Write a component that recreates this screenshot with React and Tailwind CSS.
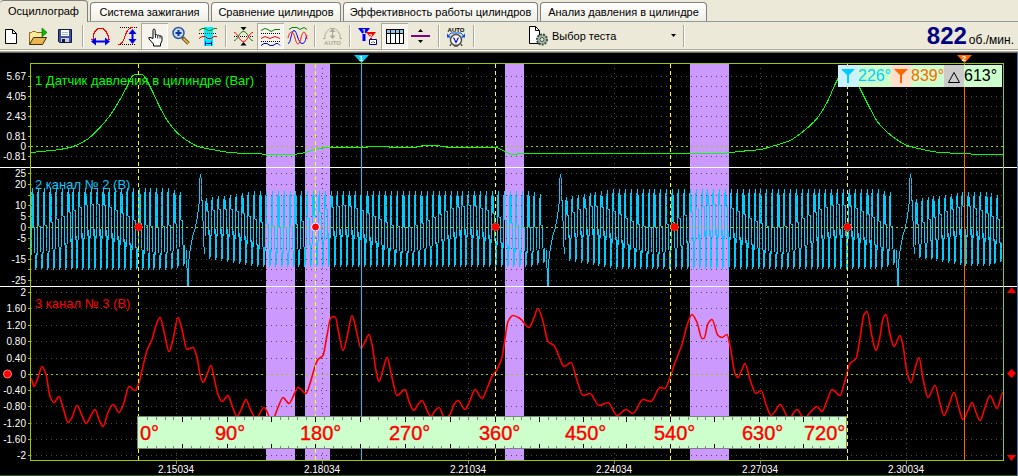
import React, { useState } from "react";

const tabs = [
  { name: "Осциллограф", width: "w-[88px]" },
  { name: "Система зажигания", width: "w-[119px]" },
  { name: "Сравнение цилиндров", width: "w-[130px]" },
  { name: "Эффективность работы цилиндров", width: "w-[195px]" },
  { name: "Анализ давления в цилиндре", width: "w-[167px]" },
];

const pressure = [
  [31, 152], [40, 151], [52, 150], [70, 147], [87, 139], [100, 127], [110, 115], [120, 99], [127, 86],
  [132, 76], [135, 74], [142, 74], [145, 77], [152, 90], [160, 107], [168, 121], [177, 132], [187, 140],
  [198, 146], [212, 149], [230, 152], [248, 153], [260, 153], [264, 154], [290, 154], [301, 153], [315, 149],
  [327, 147], [366, 147], [369, 146], [388, 146], [391, 147], [414, 147], [424, 145], [438, 145], [441, 146],
  [453, 147], [496, 147], [505, 151], [512, 154], [516, 154], [519, 153], [720, 153], [739, 151], [760, 149],
  [775, 145], [790, 140], [803, 131], [817, 118], [827, 102], [836, 82], [841, 74], [852, 74], [860, 88],
  [868, 104], [878, 122], [890, 134], [907, 145], [923, 149], [940, 152], [963, 153], [982, 154], [1003, 154],
];

const channel3 = [
  [31, 378], [34, 386], [38, 377], [42, 366], [46, 374], [50, 396], [54, 402], [59, 396], [63, 407], [68, 422],
  [72, 417], [77, 405], [82, 415], [86, 423], [91, 415], [95, 409], [99, 419], [103, 426], [108, 412],
  [113, 404], [119, 412], [124, 402], [129, 386], [135, 390], [139, 382], [142, 370], [147, 350], [152, 339],
  [156, 325], [160, 317], [164, 331], [169, 351], [173, 339], [178, 317], [182, 329], [187, 349], [193, 347],
  [197, 357], [200, 374], [203, 382], [207, 374], [211, 365], [214, 377], [218, 394], [222, 401], [228, 395],
  [232, 405], [237, 416], [242, 407], [246, 399], [250, 408], [256, 418], [264, 407], [272, 420], [278, 407],
  [283, 397], [289, 403], [294, 394], [298, 387], [306, 393], [310, 383], [315, 366], [318, 359], [323, 355],
  [327, 335], [331, 317], [335, 316], [339, 334], [343, 350], [348, 332], [352, 315], [357, 333], [361, 348],
  [365, 341], [369, 334], [372, 344], [376, 370], [379, 381], [383, 369], [387, 357], [392, 377], [397, 395],
  [405, 389], [409, 401], [414, 410], [418, 404], [422, 400], [427, 410], [431, 416], [435, 410], [439, 407],
  [445, 418], [450, 414], [454, 404], [458, 400], [465, 409], [470, 400], [475, 389], [482, 398], [487, 388],
  [492, 376], [497, 369], [502, 357], [505, 338], [508, 321], [513, 315], [520, 318], [529, 327], [534, 317],
  [538, 308], [543, 321], [548, 341], [554, 345], [559, 356], [564, 366], [571, 362], [577, 380], [583, 395],
  [590, 393], [599, 405], [608, 402], [617, 415], [626, 409], [633, 413], [643, 399], [651, 401], [660, 387],
  [665, 388], [670, 377], [675, 362], [682, 344], [687, 325], [692, 314], [697, 322], [702, 338], [704, 338],
  [708, 323], [712, 319], [718, 335], [722, 337], [727, 334], [730, 345], [735, 373], [738, 377], [742, 369],
  [745, 363], [750, 379], [756, 393], [761, 390], [766, 404], [771, 415], [775, 411], [780, 404], [789, 418],
  [797, 409], [804, 418], [811, 411], [817, 406], [822, 411], [827, 400], [832, 389], [840, 395], [845, 380],
  [850, 363], [856, 358], [860, 338], [864, 314], [867, 311], [872, 336], [876, 350], [880, 336], [883, 318],
  [886, 314], [890, 334], [894, 346], [900, 335], [903, 345], [907, 372], [911, 382], [915, 368], [919, 357],
  [923, 378], [928, 397], [935, 385], [940, 403], [944, 415], [949, 404], [954, 392], [959, 408], [963, 419],
  [968, 410], [972, 402], [976, 412], [980, 420], [985, 407], [990, 395], [997, 408], [1003, 392],
];

const bands = [[266, 29], [305, 25], [505, 19], [690, 39]];
const cycleMarks = [138, 315, 495, 670, 847];
const syncDots = [138, 315, 495, 674, 847];
const timeMarks = [
  [176, "2.15034"], [322, "2.18034"], [468, "2.21034"], [614, "2.24034"], [760, "2.27034"], [906, "2.30034"],
];

const rows = [
  [76, "5.67"], [86], [96, "4.05"], [106], [116, "2.43"], [126], [136, "0.81"], [146, "0"], [156, "-0.81"],
  [173, "25"], [184, "20"], [195], [205, "10"], [216, "5"], [227, "0"], [238, "-5"], [248], [259, "-15"], [269], [280, "-25"],
  [292, "2"], [308, "1.60"], [325, "1.20"], [341, "0.80"], [358, "0.40"], [374, "0"], [390, "-0.40"], [406, "-0.80"],
  [423, "-1.20"], [439, "-1.60"], [455, "-2"],
];

const rulerLabels = [
  [140, "0°"], [215, "90°"], [300, "180°"], [389, "270°"], [479, "360°"], [565, "450°"], [654, "540°"], [742, "630°"], [804, "720°"],
];

// cubic through the samples, flat at every local extreme
function smooth(points) {
  const slopes = points.map((p, i) => {
    const a = points[i - 1];
    const c = points[i + 1];
    if (!a || !c) return 0;
    const left = (p[1] - a[1]) / (p[0] - a[0]);
    const right = (c[1] - p[1]) / (c[0] - p[0]);
    return left * right <= 0 ? 0 : (2 * left * right) / (left + right);
  });
  let d = `M${points[0][0]} ${points[0][1] + 0.5}`;
  for (let i = 0; i < points.length - 1; i++) {
    const [x0, y0] = points[i];
    const [x1, y1] = points[i + 1];
    const h = (x1 - x0) / 3;
    d += `C${x0 + h} ${y0 + 0.5 + slopes[i] * h} ${x1 - h} ${y1 + 0.5 - slopes[i + 1] * h} ${x1} ${y1 + 0.5}`;
  }
  return d;
}

// crankshaft sensor: 58 teeth and a gap of two, one vertical run per pixel column
const gaps = [187, 547, 897];

function teeth(from, to, count, high, low, rampIn) {
  const pitch = (to - from) / count;
  let d = "";
  for (let i = 0; i < count; i++) {
    const start = Math.round(from + i * pitch);
    const fade = Math.min(1, rampIn ? 0.8 + i * 0.025 : 1, 0.86 + (count - i) * 0.05);
    const beat = Math.sin((start / 62) * Math.PI);
    const columns = [
      [-0.45 - beat * 0.2, 0.9],
      [0.3 - beat * 0.3, 1],
      [0.3 - beat * 0.3, 0.85],
      [-0.4 - beat * 0.2, 0.3 - beat * 0.3],
      [-1, -0.35 - beat * 0.3],
      [-0.95, -0.4 - beat * 0.2],
    ];
    columns.forEach(([bottom, top], k) => {
      if (k === 2 && i % 3 !== 0) return;
      const y = (v) => Math.round(227 - v * fade * (v > 0 ? high : low));
      d += `M${start + k}.5 ${y(top)}V${y(bottom)}`;
      if (k === 2) return;
      if (k === 3) d += `M${start + 2} ${y(top)}.5h2`;
    });
  }
  return d;
}

function gap(x) {
  const points = [
    [x - 1, 250], [x, 285], [x + 1, 285], [x + 1, 265], [x + 2, 254], [x + 5, 237], [x + 8, 227], [x + 10, 216],
    [x + 12, 200], [x + 12, 182], [x + 13, 174], [x + 14, 182], [x + 14, 200], [x + 15, 200], [x + 16, 240], [x + 17, 254],
  ];
  return "M" + points.map((p) => `${p[0]}.5 ${p[1]}`).join("L");
}

const channel2 =
  teeth(31, 185, 26, 39, 43, false) +
  gap(gaps[0]) +
  teeth(205, 545, 57, 36, 40, true) +
  gap(gaps[1]) +
  teeth(565, 895, 56, 38, 42, true) +
  gap(gaps[2]) +
  teeth(915, 1002, 15, 35, 39, true);

function rulerTicks() {
  const ticks = [];
  for (let s = 0; s < 4; s++) {
    const step = (cycleMarks[s + 1] - cycleMarks[s]) / 20;
    for (let i = 0; i < 20; i++) {
      if (s + i > 0) ticks.push([Math.round(cycleMarks[s] + i * step), i % 5 === 0]);
    }
  }
  return ticks;
}

function Icon({ children }) {
  return (
    <svg viewBox="0 0 27 26" className="h-[26px] w-[27px]" fill="none" aria-hidden="true">
      {children}
    </svg>
  );
}

const icons = {
  create: (
    <Icon>
      <path d="M7.500 6.500h7l4 4v10h-11z" fill="#fff" stroke="#000" />
      <path d="M14.500 6.500v4h4" stroke="#000" />
    </Icon>
  ),
  open: (
    <Icon>
      <path d="M4.500 21.500v-12h2l1-1h3l1 1h6v4" fill="#ffe79c" stroke="#8a6a14" />
      <path d="M4.500 21.500l4-7h13l-4 7z" fill="#e8b64c" stroke="#3c2c00" />
      <path d="M17 5v9l5-4.500z" fill="#00c000" stroke="#006000" strokeWidth=".6" />
    </Icon>
  ),
  save: (
    <Icon>
      <path d="M6.500 6.500h13v13h-12l-1-1z" fill="#3c50a0" stroke="#101840" />
      <path d="M9 7h8v6H9z" fill="#fff" />
      <path d="M10 9.500h6M10 11.500h6" stroke="#a8b4d8" />
      <path d="M9 15h8v4H9z" fill="#c8ccd8" />
      <path d="M10 16h3v3h-3z" fill="#101840" />
    </Icon>
  ),
  period: (
    <Icon>
      <path d="M4 16.500h2v-4l2-4 3-3h5l3 3 2 4v4h2" stroke="#f00" shapeRendering="crispEdges" />
      <path d="M7 18.500h13" stroke="#0000e8" strokeWidth="2" />
      <path d="M9 14.500v8l-5-4zM18 14.500v8l5-4z" fill="#0000e8" />
    </Icon>
  ),
  amplitude: (
    <Icon>
      <path d="M6 4.500h17M4 21.500h17" stroke="#000" strokeDasharray="1 1" shapeRendering="crispEdges" />
      <path d="M4 21.500c9 0 5-17 15-17" stroke="#f00" shapeRendering="crispEdges" />
      <path d="M18.500 9v10" stroke="#0000e8" strokeWidth="2" />
      <path d="M14.500 11h8l-4-5zM14.500 16h8l-4 5z" fill="#0000e8" />
    </Icon>
  ),
  hand: (
    <Icon>
      <path
        d="M12 15.500V7.500q0-1.500 1-1.500t1.200 1.500v4.500q1.500-1 2.300.3 1.500-.6 2.200.6 1.800-.4 2.300 1v3.600l-1.500 3.500v2h-7v-2l-4.500-5q-.8-1.800 1-1.600z"
        fill="#fff"
        stroke="#000"
      />
      <path d="M14.500 12v3M16.700 12.500v3M19 13v2.500" stroke="#000" strokeWidth=".8" />
    </Icon>
  ),
  zoom: (
    <Icon>
      <path d="M14.500 14.500l6 6" stroke="#705010" strokeWidth="3.500" />
      <path d="M15.500 15.500l5 5" stroke="#f0c060" strokeWidth="1.500" />
      <circle cx="10.500" cy="10" r="5.500" fill="#c4e0f8" stroke="#34569c" strokeWidth="1.500" />
      <path d="M7.500 10h6M10.500 7v6" stroke="#1030a0" strokeWidth="2" />
    </Icon>
  ),
  fit: (
    <Icon>
      <path d="M9 4h9v19H9z" fill="#00ecff" />
      <path d="M4 7.500l3-2h3l3 2h3l3-2h3" stroke="#008000" />
      <path d="M4 10.500h18" stroke="#000" strokeDasharray="1 1" shapeRendering="crispEdges" />
      <path d="M4 15.500l3-2h3l3 2h3l3-2h3" stroke="#f00" />
      <path d="M10 20.500h7M10.500 18.500v4M16.500 18.500v4" stroke="#0000c0" />
    </Icon>
  ),
  balance: (
    <Icon>
      <path d="M4 13.500h19" stroke="#000" strokeDasharray="1 1" shapeRendering="crispEdges" />
      <path d="M4 17.500c4 0 5-9 9.500-9s5 9 9.500 9" stroke="#008000" />
      <path d="M4 9.500c4 0 5 9 9.500 9s5-9 9.500-9" stroke="#f00" />
      <path d="M10.500 4h6l-3 3.500zM10.500 22.500h6l-3-3.500z" fill="#000" />
    </Icon>
  ),
  waves: (
    <Icon>
      <path d="M4 7.500l4-2 3 1 3 2 4-2h5" stroke="#008000" />
      <path d="M4 10.500h19M4 18.500h19" stroke="#000" strokeDasharray="1 1" shapeRendering="crispEdges" />
      <path d="M4 15.500l4-2 5 2 5-2 5 2" stroke="#f00" />
      <path d="M4 22.500l3-2h3l3 2h3l3-2h2l2 2" stroke="#0000e8" />
    </Icon>
  ),
  overlay: (
    <Icon>
      <path d="M5 6.500l3-2h5l3 2 4-2 3 2" stroke="#008000" />
      <path d="M4 20.500c3 0 3-13 6-13s4 13 8 13 3-5 5-8" stroke="#0000e8" />
      <path d="M4 15c2-8 5-8 7 0s4 8 6 0 4-8 6 1" stroke="#f00" />
    </Icon>
  ),
  autoOff: (
    <Icon>
      <path d="M4 15.500h2v-4l2-3 3-3h5l3 3 2 3v4h2" stroke="#aca899" />
      <path d="M13.500 7v7" stroke="#aca899" />
      <path d="M10.500 9h6l-3-3.500zM10.500 12.500h6l-3 3.500z" fill="#aca899" />
      <text x="13.500" y="22" textAnchor="middle" fill="#aca899" className="text-[6px] font-bold">AUTO</text>
    </Icon>
  ),
  markers: (
    <Icon>
      <path d="M4 5h12l-4.500 6v7h-3v-7z" fill="#0000f0" />
      <path d="M12 9h10l-4 5v6h-2v-6z" fill="#f00000" />
      <text x="8" y="11" fill="#fff" className="text-[7px] font-bold">1</text>
      <text x="15" y="15" fill="#fff" className="text-[6px] font-bold">2</text>
      <path d="M15.500 16.500h7v5h-7z" fill="#fff" stroke="#000080" />
      <path d="M17 19.500h1l1-1 1 1h1" stroke="#000080" strokeWidth=".7" />
    </Icon>
  ),
  table: (
    <Icon>
      <g shapeRendering="crispEdges">
        <path d="M5.500 6.500h17v14h-17z" fill="#fff" stroke="#000" />
        <path d="M6 7h16v3H6z" fill="#8cc8f0" />
        <path d="M5 10.500h18M9.500 7v13M14.500 7v13M18.500 7v13" stroke="#000" />
      </g>
    </Icon>
  ),
  split: (
    <Icon>
      <path d="M3 12h19v2H3z" fill="#800080" />
      <path d="M10 9h5l-2.500-3zM10 17h5l-2.500 3z" fill="#000" />
    </Icon>
  ),
  autoVolt: (
    <Icon>
      <text x="13" y="8.500" textAnchor="middle" fill="#000" className="text-[6px] font-bold">AUTO</text>
      <circle cx="13" cy="17" r="5.500" fill="#fff" stroke="#505050" strokeWidth="1.500" />
      <path d="M8 21l-1 2M18 21l1 2M11 23h4" stroke="#505050" strokeWidth="1.500" />
      <path d="M10.500 14.500l2.500 5 2.500-5" stroke="#0000f0" strokeWidth="1.200" />
      <path d="M5 13.500l3-3.500h10l3 3.500" stroke="#0050e0" />
      <path d="M4 10.500v4h4zM22 10.500v4h-4z" fill="#0050e0" />
    </Icon>
  ),
};

const groups = [
  [["create", "Новый"], ["open", "Открыть"], ["save", "Сохранить"]],
  [["period", "Период"], ["amplitude", "Амплитуда"], ["hand", "Рука"], ["zoom", "Масштаб"], ["fit", "Вписать"]],
  [["balance", "Совместить"], ["waves", "Раздельно"], ["overlay", "Наложить"]],
  [["autoOff", "Авто"]],
  [["markers", "Маркеры"], ["table", "Таблица"], ["split", "Разделить"]],
  [["autoVolt", "Автонастройка"]],
];

function Separator() {
  return <span className="mx-[3px] h-[22px] w-[2px] border-r border-l border-r-white border-l-[#aca899]" />;
}

function Toolbar() {
  const [pressed, setPressed] = useState(["hand", "waves", "table"]);
  const toggle = (id) =>
    setPressed((list) => (list.includes(id) ? list.filter((x) => x !== id) : [...list, id]));

  return (
    <div className="flex h-7 items-center overflow-hidden border-b border-[#aca899]">
      <div className="-ml-0.5 flex items-center">
        {groups.map((group, i) => (
          <React.Fragment key={i}>
            {group.map(([id, label]) => (
              <button
                key={id}
                type="button"
                aria-label={label}
                aria-pressed={pressed.includes(id)}
                disabled={id === "autoOff"}
                onClick={() => toggle(id)}
                className={
                  pressed.includes(id)
                    ? "h-[26px] w-[27px] bg-[#f6f4ec] shadow-[inset_1px_1px_#aca899,inset_-1px_-1px_#ffffff]"
                    : "h-[26px] w-[27px]"
                }
              >
                {icons[id]}
              </button>
            ))}
            <Separator />
          </React.Fragment>
        ))}
      </div>
      <label className="relative ml-12 flex items-center">
        <svg viewBox="0 0 24 24" className="h-6 w-6" fill="none" aria-hidden="true">
          <path d="M3.500 2.500h6l4 4v13h-10z" fill="#fff" stroke="#000" />
          <path d="M9.500 2.500v4h4" stroke="#000" />
          <circle cx="16" cy="15.500" r="5" fill="#a8bcb0" stroke="#405048" strokeWidth="2" strokeDasharray="2 1" />
          <circle cx="16" cy="15.500" r="2" fill="#ece9d8" stroke="#405048" />
        </svg>
        <select
          aria-label="Выбор теста"
          className="w-[126px] appearance-none bg-transparent pl-0.5 text-[11px] leading-4"
        >
          <option>Выбор теста</option>
        </select>
        <svg viewBox="0 0 5 3" className="pointer-events-none absolute right-0 h-[3px] w-[5px]" aria-hidden="true">
          <path d="M0 0h5L2.500 3z" />
        </svg>
      </label>
      <span className="ml-1" />
      <Separator />
      <div className="ml-auto flex items-baseline gap-0.5 pr-1">
        <span className="text-[24px] leading-6 font-bold text-[#000080]">822</span>
        <span className="text-[12px] leading-4">об./мин.</span>
      </div>
    </div>
  );
}

function Flag({ className }) {
  return (
    <svg viewBox="0 0 20 22" className={className} fill="currentColor" aria-hidden="true">
      <path d="M3 4h14l-6 6v8H9v-8z" />
    </svg>
  );
}

function Readout() {
  return (
    <div className="absolute top-3 right-4 flex h-[22px] items-center bg-[#ccffcc] text-[16px] leading-5">
      <Flag className="h-[22px] w-5 bg-[#ccf2ff] text-[#00ccff]" />
      <span className="w-[33px] text-[#00ccff]">226°</span>
      <Flag className="h-[22px] w-5 bg-[#ffdfcc] text-[#ff6600]" />
      <span className="w-[33px] text-[#ff6600]">839°</span>
      <svg viewBox="0 0 20 22" className="h-[22px] w-5 bg-[#cccccc]" fill="none" aria-hidden="true">
        <path d="M4.500 17.500h11l-5.500-10z" stroke="#000" />
      </svg>
      <span className="w-[38px] text-black">613°</span>
    </div>
  );
}

function Scope() {
  return (
    <div className="relative border-t border-[#716f64] bg-black">
      <svg viewBox="0 53 1018 423" className="block h-auto w-full" fill="none" role="img" aria-label="Осциллограмма">
        <g fill="#cc99ff" shapeRendering="crispEdges">
          {bands.map(([x, w]) => (
            <rect key={x} x={x} y="64" width={w} height="396" />
          ))}
        </g>

        <path d={channel2} stroke="#00ccff" shapeRendering="crispEdges" />

        <g shapeRendering="crispEdges">
          {rows.map(([y, label]) => (
            <g key={y}>
              {label === "0" ? (
                <path d={`M31 ${y}.5H1003`} stroke="#99cc00" strokeDasharray="2 3" />
              ) : (
                <path d={`M31 ${y}.5H1003`} stroke="#4c4c4c" strokeDasharray="1 4" />
              )}
              <path d={`M28 ${y}.5h2`} stroke="#99cc00" />
            </g>
          ))}
          {timeMarks.map(([x]) => (
            <g key={x}>
              <path d={`M${x}.5 68V460`} stroke="#4c4c4c" strokeDasharray="1 4" />
              <path d={`M${x}.5 461v3`} stroke="#808080" />
            </g>
          ))}
        </g>

        <g className="text-[10px]" fill="#fff" textAnchor="end">
          {rows.map(([y, label]) => label && (
            <text key={y} x="26" y={y + 4}>{label}</text>
          ))}
        </g>
        <g className="text-[10px]" fill="#fff" textAnchor="middle">
          {timeMarks.map(([x, label]) => (
            <text key={x} x={x} y="473">{label}</text>
          ))}
        </g>

        <g className="text-[13px]">
          <text x="35" y="85" fill="#00ff00">1 Датчик давления в цилиндре (Bar)</text>
          <text x="35" y="189" fill="#00ccff">2 канал № 2 (B)</text>
          <text x="35" y="308" fill="#ff0000">3 канал № 3 (B)</text>
        </g>

        <path d={smooth(pressure)} stroke="#00ff00" shapeRendering="crispEdges" />
        <path d={smooth(channel3)} stroke="#ff0000" strokeWidth="1.600" />

        <g shapeRendering="crispEdges">
          <path d="M0 167.500h1018M0 286.500h1018" stroke="#fff" />
          <path d="M30.500 63.500h973v397h-973z" stroke="#99cc00" />
          {cycleMarks.map((x) => (
            <path key={x} d={`M${x}.5 64V461`} stroke="#ffff00" strokeDasharray="4 3" />
          ))}
          <path d="M361.500 62V460" stroke="#00ccff" />
          <path d="M964.500 62V460" stroke="#ff6600" />
        </g>

        <path d="M354 55h15l-7.500 8z" fill="#00ccff" />
        <path d="M957 55h15l-7.500 8z" fill="#ff6600" />
        <g className="text-[8px] font-bold" fill="#fff" textAnchor="middle">
          <text x="361" y="61">1</text>
          <text x="964" y="61">2</text>
        </g>

        {syncDots.map((x) => (
          <circle key={x} cx={x + 0.5} cy="227" r="4" fill="#f00" stroke={x === 315 ? "#fff" : "#ffcc00"} strokeDasharray={x === 315 ? undefined : "1 2"} />
        ))}
        <circle cx="7.500" cy="374" r="4" fill="#f00" stroke="#ff8080" />
        <path d="M1007 293h9l-4.500-6zM1007 455h9l-4.500 6zM1011.500 369l4.500 4.500-4.500 4.500-4.500-4.500z" fill="#f00" />

        <g shapeRendering="crispEdges">
          <rect x="137.500" y="416.500" width="709" height="32" fill="#ccffcc" stroke="#808080" />
          {rulerTicks().map(([x, major]) => (
            <path
              key={x}
              d={major ? `M${x}.5 417v5M${x}.5 448v-4` : `M${x}.5 417v3M${x}.5 448v-2`}
              stroke={major ? "#000" : "#808080"}
            />
          ))}
        </g>
        <g className="text-[20px]" fill="#f00" stroke="#f00" strokeWidth=".4">
          {rulerLabels.map(([x, label]) => (
            <text key={x} x={x} y="440">{label}</text>
          ))}
        </g>

        <path d="M0 475.500h1018" stroke="#285a14" />
        <path d="M1017.500 53v423" stroke="#4a7ab0" />
      </svg>
      <Readout />
    </div>
  );
}

export default function App() {
  const [active, setActive] = useState(0);

  return (
    <div className="w-full bg-[#ece9d8] font-['Liberation_Sans',Arial,sans-serif] text-black">
      <div role="tablist" className="flex h-[22px] items-end gap-0.5 border-b border-[#919b9c]">
        {tabs.map((tab, i) => (
          <button
            key={tab.name}
            type="button"
            role="tab"
            aria-selected={i === active}
            onClick={() => setActive(i)}
            className={`${tab.width} shrink-0 rounded-t-sm border border-b-0 border-[#808080] text-[11px] leading-4 whitespace-nowrap ${
              i === active ? "-mb-px h-[22px] border-l-0 bg-[#ece9d8] pb-0.5" : "h-[19px] bg-linear-to-b from-white to-[#f0eee4]"
            }`}
          >
            {tab.name}
          </button>
        ))}
      </div>
      <Toolbar />
      <div className="h-px bg-white" />
      <div className="h-px bg-[#aca899]" />
      <Scope />
    </div>
  );
}
